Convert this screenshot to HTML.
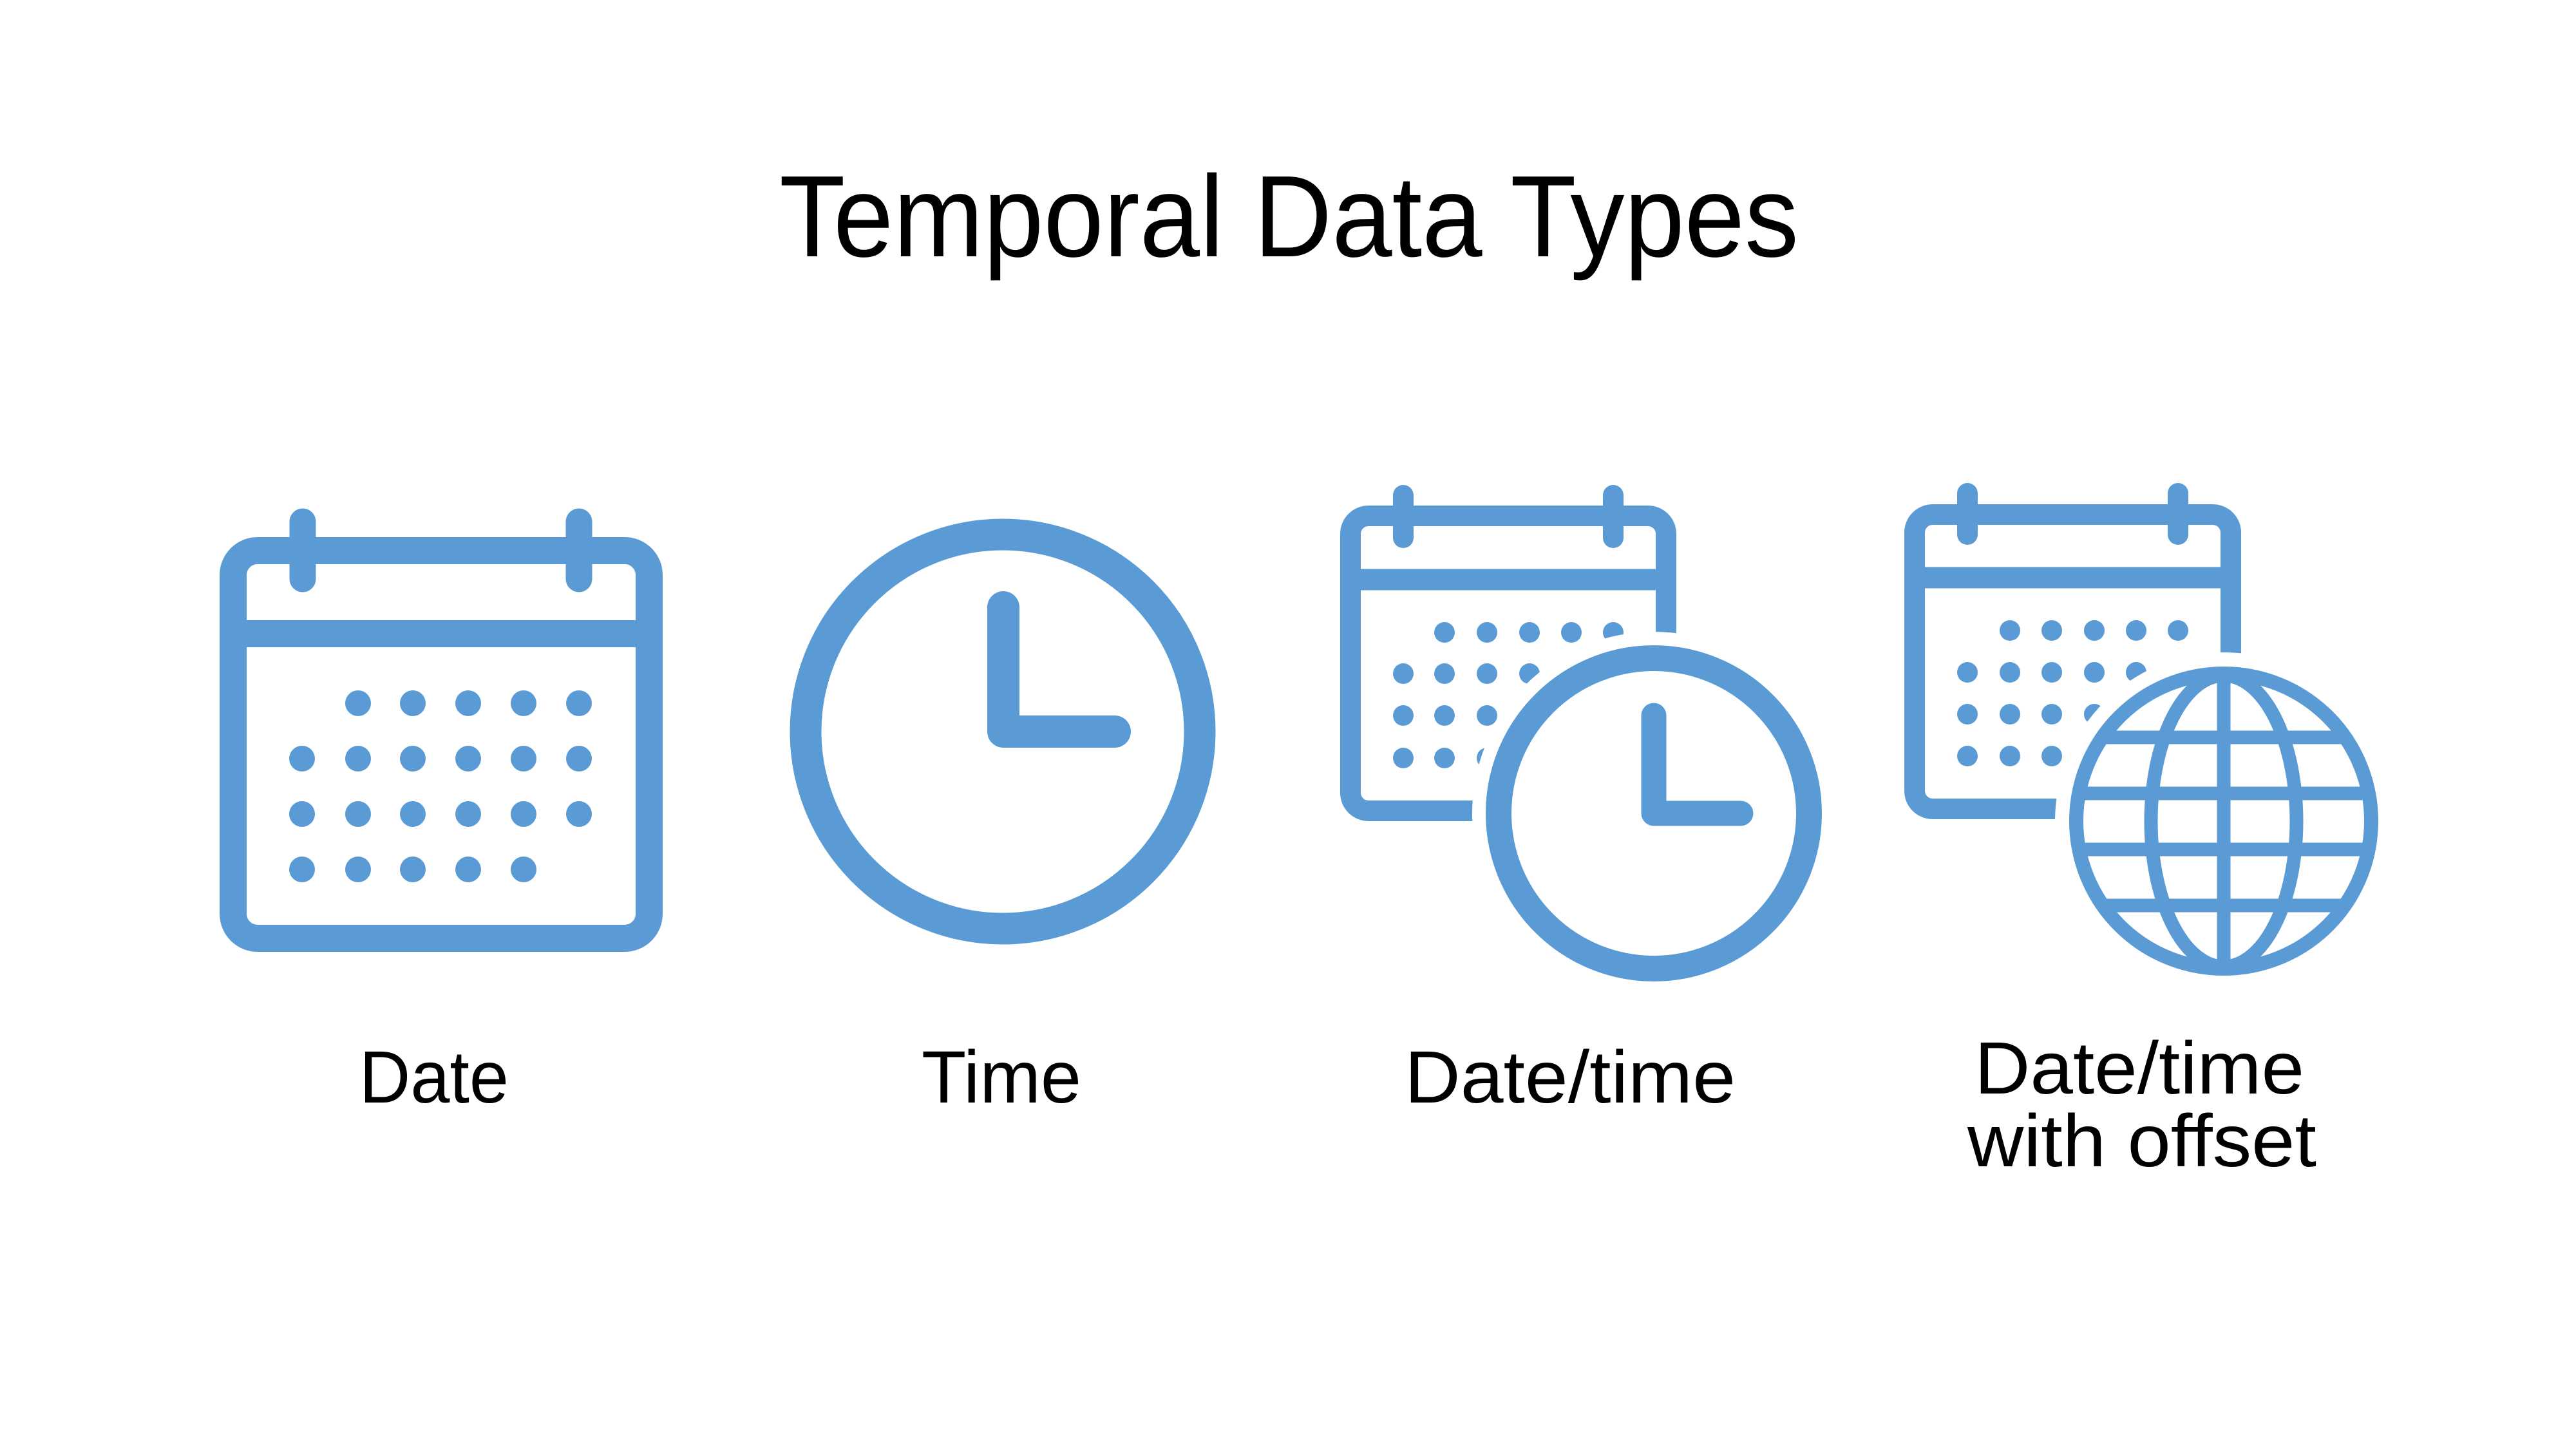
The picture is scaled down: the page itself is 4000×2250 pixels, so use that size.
<!DOCTYPE html>
<html><head><meta charset="utf-8"><style>
html,body{margin:0;padding:0;background:#fff;}
svg{display:block;}
text{font-family:"Liberation Sans",sans-serif;fill:#000;}
</style></head><body>
<svg width="4000" height="2250" viewBox="0 0 4000 2250" xmlns="http://www.w3.org/2000/svg">
<text x="1210" y="398" font-size="180" textLength="1583" lengthAdjust="spacingAndGlyphs">Temporal Data Types</text>
<text x="558" y="1712" font-size="115" textLength="232" lengthAdjust="spacingAndGlyphs">Date</text>
<text x="1431" y="1712" font-size="115" textLength="248" lengthAdjust="spacingAndGlyphs">Time</text>
<text x="2181" y="1712" font-size="115" textLength="514" lengthAdjust="spacingAndGlyphs">Date/time</text>
<text x="3066" y="1698" font-size="115" textLength="512" lengthAdjust="spacingAndGlyphs">Date/time</text>
<text x="3055" y="1811" font-size="115" textLength="542" lengthAdjust="spacingAndGlyphs">with offset</text>

<g fill="none" stroke="#5b9bd5" stroke-linecap="round">
<rect x="362" y="855" width="646" height="602" rx="38" stroke-width="42"/>
<line x1="362" y1="984" x2="1008" y2="984" stroke-width="42" stroke-linecap="butt"/>
<line x1="470" y1="810" x2="470" y2="899" stroke-width="41"/>
<line x1="899" y1="810" x2="899" y2="899" stroke-width="41"/>
<circle cx="1557" cy="1136" r="306" stroke-width="49"/>
<path d="M1558 943 V1136 H1731" stroke-width="50" stroke-linejoin="round"/>
<rect x="2097" y="801" width="490" height="458" rx="28" stroke-width="32"/>
<line x1="2097" y1="900" x2="2587" y2="900" stroke-width="33" stroke-linecap="butt"/>
<line x1="2179" y1="769" x2="2179" y2="835" stroke-width="32"/>
<line x1="2505" y1="769" x2="2505" y2="835" stroke-width="32"/>
<rect x="2973" y="799" width="491" height="457" rx="28" stroke-width="32"/>
<line x1="2973" y1="897" x2="3464" y2="897" stroke-width="33" stroke-linecap="butt"/>
<line x1="3055" y1="766" x2="3055" y2="830" stroke-width="32"/>
<line x1="3382" y1="766" x2="3382" y2="830" stroke-width="32"/>
</g>

<g fill="#5b9bd5">
<g>
<circle cx="556" cy="1092" r="20"/><circle cx="641" cy="1092" r="20"/><circle cx="727" cy="1092" r="20"/><circle cx="813" cy="1092" r="20"/><circle cx="899" cy="1092" r="20"/>
<circle cx="469" cy="1178" r="20"/><circle cx="556" cy="1178" r="20"/><circle cx="641" cy="1178" r="20"/><circle cx="727" cy="1178" r="20"/><circle cx="813" cy="1178" r="20"/><circle cx="899" cy="1178" r="20"/>
<circle cx="469" cy="1264" r="20"/><circle cx="556" cy="1264" r="20"/><circle cx="641" cy="1264" r="20"/><circle cx="727" cy="1264" r="20"/><circle cx="813" cy="1264" r="20"/><circle cx="899" cy="1264" r="20"/>
<circle cx="469" cy="1350" r="20"/><circle cx="556" cy="1350" r="20"/><circle cx="641" cy="1350" r="20"/><circle cx="727" cy="1350" r="20"/><circle cx="813" cy="1350" r="20"/>
</g>
<g>
<circle cx="2243" cy="982" r="16"/><circle cx="2309" cy="982" r="16"/><circle cx="2375" cy="982" r="16"/><circle cx="2440" cy="982" r="16"/><circle cx="2505" cy="982" r="16"/>
<circle cx="2179" cy="1046" r="16"/><circle cx="2243" cy="1046" r="16"/><circle cx="2309" cy="1046" r="16"/><circle cx="2375" cy="1046" r="16"/><circle cx="2440" cy="1046" r="16"/><circle cx="2505" cy="1046" r="16"/>
<circle cx="2179" cy="1111" r="16"/><circle cx="2243" cy="1111" r="16"/><circle cx="2309" cy="1111" r="16"/><circle cx="2375" cy="1111" r="16"/><circle cx="2440" cy="1111" r="16"/><circle cx="2505" cy="1111" r="16"/>
<circle cx="2179" cy="1177" r="16"/><circle cx="2243" cy="1177" r="16"/><circle cx="2309" cy="1177" r="16"/><circle cx="2375" cy="1177" r="16"/><circle cx="2440" cy="1177" r="16"/>
</g>
<g>
<circle cx="3121" cy="979" r="16"/><circle cx="3186" cy="979" r="16"/><circle cx="3252" cy="979" r="16"/><circle cx="3317" cy="979" r="16"/><circle cx="3382" cy="979" r="16"/>
<circle cx="3055" cy="1044" r="16"/><circle cx="3121" cy="1044" r="16"/><circle cx="3186" cy="1044" r="16"/><circle cx="3252" cy="1044" r="16"/><circle cx="3317" cy="1044" r="16"/><circle cx="3382" cy="1044" r="16"/>
<circle cx="3055" cy="1109" r="16"/><circle cx="3121" cy="1109" r="16"/><circle cx="3186" cy="1109" r="16"/><circle cx="3252" cy="1109" r="16"/><circle cx="3317" cy="1109" r="16"/><circle cx="3382" cy="1109" r="16"/>
<circle cx="3055" cy="1174" r="16"/><circle cx="3121" cy="1174" r="16"/><circle cx="3186" cy="1174" r="16"/><circle cx="3252" cy="1174" r="16"/><circle cx="3317" cy="1174" r="16"/>
</g>
</g>

<circle cx="2568" cy="1263" r="282" fill="#fff"/>
<g fill="none" stroke="#5b9bd5" stroke-linecap="round">
<circle cx="2568" cy="1263" r="241" stroke-width="40"/>
<path d="M2568 1111 V1263 H2703" stroke-width="39" stroke-linejoin="round"/>
</g>

<circle cx="3453" cy="1275" r="262" fill="#fff"/>
<defs><clipPath id="gc"><circle cx="3453" cy="1275" r="235"/></clipPath></defs>
<g fill="none" stroke="#5b9bd5">
<circle cx="3453" cy="1275" r="229" stroke-width="22"/>
<g clip-path="url(#gc)" stroke-width="21">
<line x1="3453" y1="1030" x2="3453" y2="1520"/>
<ellipse cx="3453" cy="1275" rx="113" ry="226"/>
<line x1="3190" y1="1145" x2="3720" y2="1145"/>
<line x1="3190" y1="1232" x2="3720" y2="1232"/>
<line x1="3190" y1="1319" x2="3720" y2="1319"/>
<line x1="3190" y1="1406" x2="3720" y2="1406"/>
</g>
</g>
</svg>
</body></html>
